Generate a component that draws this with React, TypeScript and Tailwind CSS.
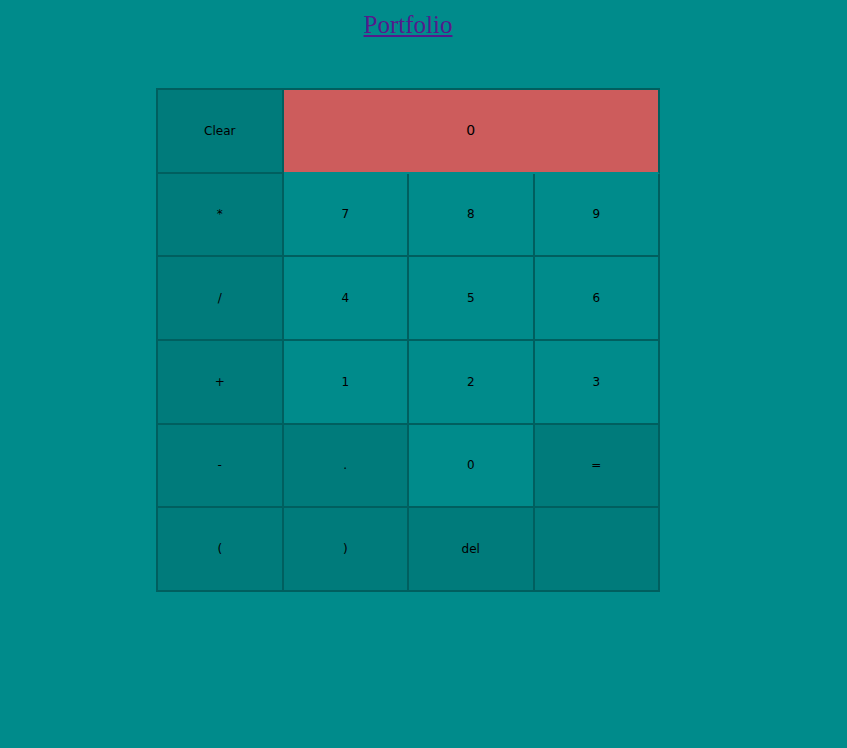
const keys: { label: string; dark: boolean }[] = [
  { label: "*", dark: true },
  { label: "7", dark: false },
  { label: "8", dark: false },
  { label: "9", dark: false },
  { label: "/", dark: true },
  { label: "4", dark: false },
  { label: "5", dark: false },
  { label: "6", dark: false },
  { label: "+", dark: true },
  { label: "1", dark: false },
  { label: "2", dark: false },
  { label: "3", dark: false },
  { label: "-", dark: true },
  { label: ".", dark: true },
  { label: "0", dark: false },
  { label: "=", dark: true },
  { label: "(", dark: true },
  { label: ")", dark: true },
  { label: "del", dark: true },
  { label: "", dark: true },
];

function Key({ label, dark }: { label: string; dark: boolean }) {
  return (
    <button
      className={
        "flex items-center justify-center border-r-2 border-b-2 border-[#005f5f] text-[12px] text-black " +
        (dark ? "bg-[#007b7b]" : "bg-[#008b8b]")
      }
    >
      {label}
    </button>
  );
}

export default function App() {
  return (
    <div className="min-h-[748px] w-full bg-[#008b8b] font-['DejaVu_Sans',sans-serif]">
      <div className="ml-[156px] w-[504px] pt-[10px]">
        <div className="text-center">
          <a
            href="#"
            className="font-['Liberation_Serif',serif] text-[25px] leading-[29px] text-[#551a8b] underline"
          >
            Portfolio
          </a>
        </div>
        <div className="mt-[48px] grid h-[504px] w-[504px] grid-cols-4 grid-rows-6 border-t-2 border-l-2 border-[#005f5f]">
          <button className="flex items-center justify-center border-r-2 border-b-2 border-[#005f5f] bg-[#007b7b] text-[12px] text-black">
            Clear
          </button>
          <div className="col-span-3 flex items-center justify-center border-r-2 border-b-2 border-r-[#005f5f] border-b-[#008b8b] bg-[#cd5c5c] text-[14px] text-black">
            0
          </div>
          {keys.map((k, i) => (
            <Key key={i} label={k.label} dark={k.dark} />
          ))}
        </div>
      </div>
    </div>
  );
}
